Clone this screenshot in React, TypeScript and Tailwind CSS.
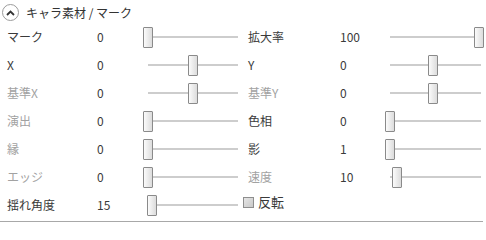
import { type ReactNode } from 'react';

type Row = { label: string; value: string; pos: number; dim?: boolean };

const left: Row[] = [
  { label: 'マーク', value: '0', pos: 0 },
  { label: 'X', value: '0', pos: 45 },
  { label: '基準X', value: '0', pos: 45, dim: true },
  { label: '演出', value: '0', pos: 0, dim: true },
  { label: '縁', value: '0', pos: 0, dim: true },
  { label: 'エッジ', value: '0', pos: 0, dim: true },
  { label: '揺れ角度', value: '15', pos: 4 },
];

const right: (Row | null)[] = [
  { label: '拡大率', value: '100', pos: 89 },
  { label: 'Y', value: '0', pos: 43 },
  { label: '基準Y', value: '0', pos: 43, dim: true },
  { label: '色相', value: '0', pos: 0 },
  { label: '影', value: '1', pos: 0 },
  { label: '速度', value: '10', pos: 7, dim: true },
  null,
];

function Slider({ pos }: { pos: number }) {
  return (
    <div className="relative h-[28px] w-full">
      {/* track */}
      <div className="absolute left-[5px] right-[3px] top-[13px] h-[2px] bg-[#cdcdcd]" />
      {/* thumb */}
      <div
        className="absolute top-[4px] h-[21px] w-[10px] rounded-[1px] border border-[#8a8a8a] bg-gradient-to-r from-[#fbfbfb] to-[#dcdcdc]"
        style={{ left: pos }}
      />
    </div>
  );
}

function Cell({ row }: { row: Row }): ReactNode {
  return (
    <>
      <div className={`flex h-[28px] items-center ${row.dim ? 'text-[#a2a2a2]' : 'text-[#3a3a3a]'}`}>
        {row.label}
      </div>
      <div className="flex h-[28px] items-center text-[#3a3a3a]">{row.value}</div>
      <Slider pos={row.pos} />
    </>
  );
}

export default function App() {
  return (
    <div
      className="h-[227px] w-[486px] overflow-hidden bg-white text-[12px] leading-none"
      style={{ fontFamily: '"Noto Sans CJK JP", "Noto Sans", sans-serif' }}
    >
      {/* header */}
      <div className="flex h-[23px] items-center gap-[7px] pl-[2px] pt-[2px]">
        <div className="flex h-[17px] w-[17px] items-center justify-center rounded-full border border-[#9c9c9c]">
          <svg width="9" height="6" viewBox="0 0 9 6" fill="none">
            <path d="M1 5l3.5-3.5L8 5" stroke="#333" strokeWidth="1.8" />
          </svg>
        </div>
        <span className="text-[#333]">キャラ素材 / マーク</span>
      </div>

      {/* rows */}
      <div className="grid grid-cols-[90px_46px_98px_7px_92px_45px_99px] pl-[7px]">
        {left.map((l, i) => {
          const r = right[i];
          return (
            <div key={l.label} className="contents">
              <Cell row={l} />
              <div />
              {r ? (
                <Cell row={r} />
              ) : (
                <div className="col-span-3 flex h-[28px] items-start gap-[4px] pt-[4px]">
                  <div className="-ml-[5px] mt-[2px] h-[11px] w-[11px] border border-[#8e8e8e] bg-gradient-to-br from-[#e6e6e6] to-[#c9c9c9]" />
                  <span className="text-[13px] text-[#3a3a3a]">反転</span>
                </div>
              )}
            </div>
          );
        })}
      </div>

      <div className="mt-[2px] mr-[3px] h-px bg-[#a8a8a8]" />
    </div>
  );
}
